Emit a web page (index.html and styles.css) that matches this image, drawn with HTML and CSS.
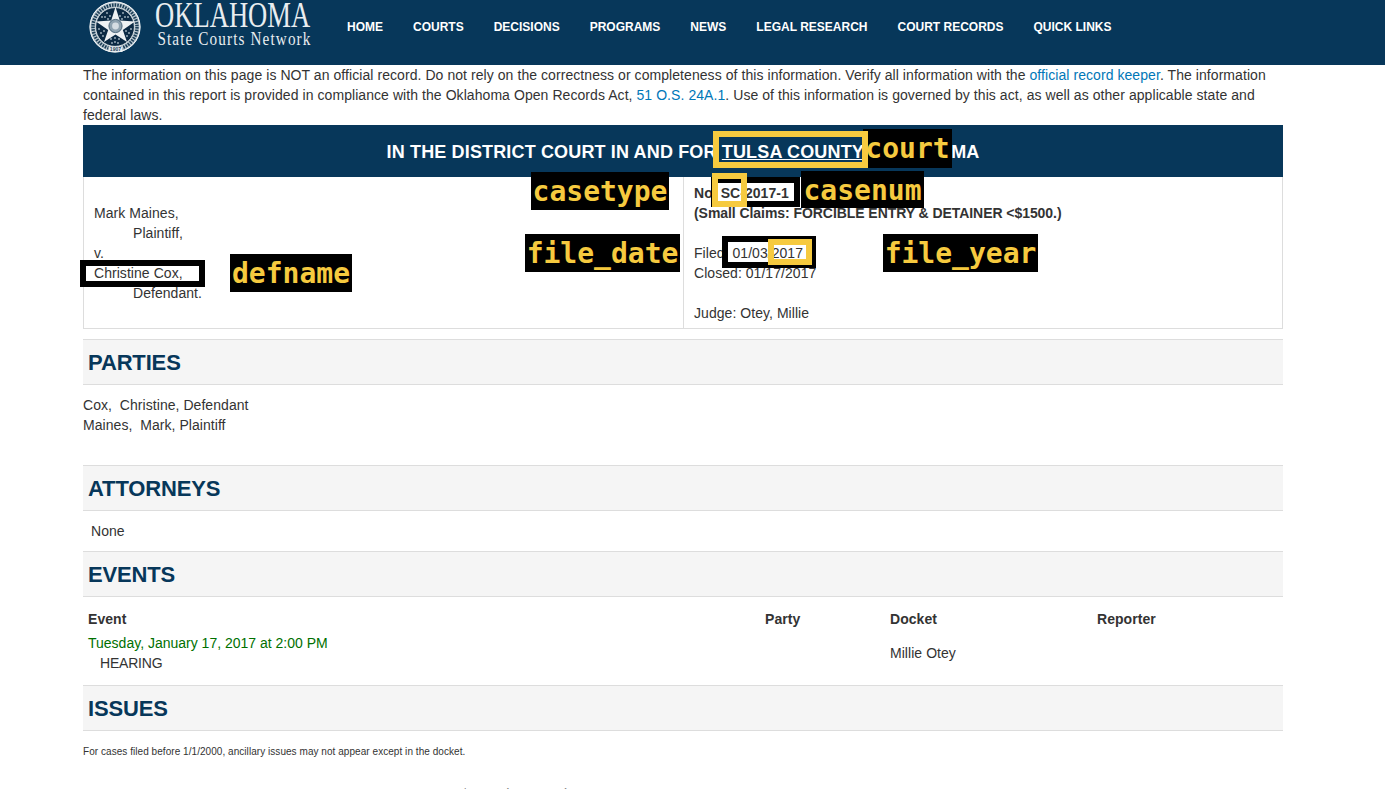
FILE: index.html
```html
<!DOCTYPE html>
<html lang="en">
<head>
    <meta charset="UTF-8">
    <title>Oklahoma State Courts Network</title>
    <link rel="stylesheet" href="styles.css">
</head>
<body>
    <header class="site-header">
        <div class="brand">
            <svg class="seal" width="52" height="52" viewBox="0 0 52 52">
                <circle cx="26" cy="26" r="25.5" fill="#b9c6cf"/>
                <circle cx="26" cy="26" r="25" fill="none" stroke="#f2f4f6" stroke-width="1"/>
                <circle cx="26" cy="26" r="22" fill="none" stroke="#1d3f58" stroke-width="3.4" stroke-dasharray="1.6 1.1"/>
                <circle cx="26" cy="26" r="19.4" fill="#0c2a44" stroke="#eef1f3" stroke-width="0.8"/>
                <g fill="#a9b9c4">
                    <circle cx="18" cy="12" r="0.9"/><circle cx="21" cy="15" r="0.9"/><circle cx="16" cy="16" r="0.9"/><circle cx="13" cy="16" r="0.9"/><circle cx="19" cy="18" r="0.9"/>
                    <circle cx="34" cy="12" r="0.9"/><circle cx="31" cy="15" r="0.9"/><circle cx="36" cy="16" r="0.9"/><circle cx="39" cy="16" r="0.9"/><circle cx="33" cy="18" r="0.9"/>
                    <circle cx="10" cy="28" r="0.9"/><circle cx="12" cy="32" r="0.9"/><circle cx="15" cy="30" r="0.9"/><circle cx="14" cy="35" r="0.9"/>
                    <circle cx="42" cy="28" r="0.9"/><circle cx="40" cy="32" r="0.9"/><circle cx="37" cy="30" r="0.9"/><circle cx="38" cy="35" r="0.9"/>
                    <circle cx="22" cy="38" r="0.9"/><circle cx="26" cy="37" r="0.9"/><circle cx="30" cy="38" r="0.9"/><circle cx="23" cy="42" r="0.9"/><circle cx="26" cy="41" r="0.9"/><circle cx="29" cy="42" r="0.9"/>
                </g>
                <polygon points="26.5,6 30.8,19.4 46,20.5 33.8,29 38,41 26.5,33.6 15,41 19.2,29 7,20.5 22.2,19.4" fill="#eef1f3"/>
                <circle cx="26.5" cy="25" r="6.6" fill="#8ea2b0" stroke="#35536a" stroke-width="0.8"/>
                <circle cx="26.5" cy="25" r="3.4" fill="#d5dde3"/>
                <rect x="19.5" y="45.5" width="14" height="5.5" fill="#e8ecef"/>
                <text class="seal-year" x="26.5" y="50" text-anchor="middle">1907</text>
            </svg>
            <div class="brand-text">
                <div class="brand-title">OKLAHOMA</div>
                <div class="brand-sub">State Courts Network</div>
            </div>
        </div>
        <nav class="main-nav">
            <a href="#">HOME</a>
            <a href="#">COURTS</a>
            <a href="#">DECISIONS</a>
            <a href="#">PROGRAMS</a>
            <a href="#">NEWS</a>
            <a href="#">LEGAL RESEARCH</a>
            <a href="#">COURT RECORDS</a>
            <a href="#">QUICK LINKS</a>
        </nav>
    </header>

    <main class="container">
        <p class="notice">The information on this page is NOT an official record. Do not rely on the correctness or completeness of this information. Verify all information with the <a href="#">official record keeper</a>. The information contained in this report is provided in compliance with the Oklahoma Open Records Act, <a href="#">51 O.S. 24A.1</a>. Use of this information is governed by this act, as well as other applicable state and federal laws.</p>

        <div class="court-banner">IN THE DISTRICT COURT IN AND FOR <a href="#">TULSA COUNTY</a>, OKLAHOMA</div>

        <div class="case-style">
            <div class="case-col case-parties">
                <div>Mark Maines,</div>
                <div class="indent">Plaintiff,</div>
                <div>v.</div>
                <div>Christine Cox,</div>
                <div class="indent">Defendant.</div>
            </div>
            <div class="case-col case-info">
                <div class="strong">No. SC-2017-1</div>
                <div class="strong case-kind">(Small Claims: FORCIBLE ENTRY &amp; DETAINER &lt;$1500.)</div>
                <div class="blank"></div>
                <div>Filed: 01/03/2017</div>
                <div>Closed: 01/17/2017</div>
                <div class="blank"></div>
                <div>Judge: Otey, Millie</div>
            </div>
        </div>

        <h2 class="section-head parties-head">PARTIES</h2>
        <div class="parties-list">
            <div>Cox,&nbsp; Christine, Defendant</div>
            <div>Maines,&nbsp; Mark, Plaintiff</div>
        </div>

        <h2 class="section-head">ATTORNEYS</h2>
        <div class="none-row">None</div>

        <h2 class="section-head">EVENTS</h2>
        <div class="events">
            <div class="event-col event-main">
                <div class="strong">Event</div>
                <div class="event-date">Tuesday, January 17, 2017 at 2:00 PM</div>
                <div class="event-name">HEARING</div>
            </div>
            <div class="event-col event-party">
                <div class="strong">Party</div>
            </div>
            <div class="event-col event-docket">
                <div class="strong">Docket</div>
                <div class="event-judge">Millie Otey</div>
            </div>
            <div class="event-col">
                <div class="strong">Reporter</div>
            </div>
        </div>

        <h2 class="section-head">ISSUES</h2>
        <p class="small-note">For cases filed before 1/1/2000, ancillary issues may not appear except in the docket.</p>
        <div class="issue-line">
            <span class="issue-no">Issue # 1.</span>
            <span>FORCIBLE ENTRY &amp; DETAINER &lt;$1500 (SCFED1)</span>
        </div>

        <!-- labels and boxes drawn over the scan -->
        <span class="mark mark-black box-defname"></span>
        <span class="tag tag-defname">defname</span>
        <span class="tag tag-court">court</span>
        <span class="mark mark-yellow box-court"></span>
        <span class="tag tag-casetype">casetype</span>
        <span class="mark mark-black box-casenum"></span>
        <span class="mark mark-yellow box-sc"></span>
        <span class="tag tag-casenum">casenum</span>
        <span class="tag tag-filedate">file_date</span>
        <span class="mark mark-black box-filedate"></span>
        <span class="mark mark-yellow box-fileyear"></span>
        <span class="tag tag-fileyear">file_year</span>
    </main>
</body>
</html>
```

FILE: styles.css
```css
html, body {
    margin: 0;
    height: 789px;
    overflow: hidden;
}
body {
    font-family: "Liberation Sans", Arial, sans-serif;
    font-size: 14px;
    line-height: 20px;
    letter-spacing: 0.05px;
    color: #333;
    background-color: white;
}
a {
    color: #0077b8;
    text-decoration: none;
}
.strong {
    font-weight: bold;
}

.site-header {
    height: 65px;
    background-color: #07375a;
    display: flex;
    align-items: flex-start;
    padding-left: 89px;
    box-sizing: border-box;
}
.brand {
    display: flex;
    width: 258px;
    padding-top: 1px;
}
.seal {
    flex: none;
}
.seal-year {
    font-family: "Liberation Sans", Arial, sans-serif;
    font-size: 5px;
    font-weight: bold;
    fill: #1d3f58;
}
.brand-text {
    margin-left: 14px;
    margin-top: -1px;
    color: #e9edf0;
    font-family: "Liberation Serif", "Times New Roman", serif;
    white-space: nowrap;
}
.brand-title {
    font-size: 35px;
    line-height: 32px;
    letter-spacing: 0;
    transform: scaleX(0.76);
    transform-origin: left top;
}
.brand-sub {
    font-size: 19px;
    line-height: 18px;
    letter-spacing: 1.4px;
    margin-top: -2px;
    padding-left: 3px;
    transform: scaleX(0.8);
    transform-origin: left top;
}
.main-nav {
    display: flex;
    gap: 30px;
    padding-top: 17px;
}
.main-nav a {
    color: white;
    font-size: 12px;
    font-weight: bold;
    line-height: 20px;
    letter-spacing: 0;
}

.container {
    position: relative;
    width: 1200px;
    margin-left: 83px;
}
.notice {
    margin: 0;
    letter-spacing: 0.065px;
}
.court-banner {
    height: 52px;
    line-height: 54px;
    background-color: #07375a;
    color: white;
    font-size: 18px;
    font-weight: bold;
    letter-spacing: 0.15px;
    text-align: center;
}
.court-banner a {
    color: white;
    text-decoration: underline;
}
.case-style {
    display: flex;
    height: 152px;
    box-sizing: border-box;
    border: 1px solid #ddd;
    border-top: none;
}
.case-col {
    padding: 26px 10px 0;
}
.case-parties {
    width: 579px;
    border-right: 1px solid #ddd;
}
.case-info {
    padding-top: 6px;
}
.case-kind {
    letter-spacing: -0.06px;
}
.blank {
    height: 20px;
}
.indent {
    padding-left: 39px;
}

.section-head {
    margin: 0;
    height: 46px;
    box-sizing: border-box;
    border-top: 1px solid #ddd;
    border-bottom: 1px solid #ddd;
    background-color: #f5f5f5;
    color: #07375a;
    font-size: 22px;
    line-height: 45px;
    letter-spacing: -0.15px;
    padding-left: 5px;
}
.parties-head {
    margin-top: 10px;
}
.parties-list {
    height: 80px;
    padding-top: 10px;
    box-sizing: border-box;
}
.none-row {
    height: 40px;
    line-height: 40px;
    padding-left: 8px;
}
.events {
    display: flex;
    height: 88px;
    padding: 12px 0 0 5px;
    box-sizing: border-box;
}
.event-main {
    width: 677px;
}
.event-party {
    width: 125px;
}
.event-docket {
    width: 207px;
}
.event-date {
    color: #007000;
    letter-spacing: 0;
    margin-top: 4px;
}
.event-name {
    padding-left: 12px;
    letter-spacing: -0.2px;
}
.event-judge {
    margin-top: 14px;
}
.small-note {
    margin: 0;
    padding-top: 11px;
    font-size: 10px;
    line-height: 20px;
}
.issue-line {
    display: flex;
    margin-top: 22px;
    padding-left: 5px;
    color: #777;
}
.issue-no {
    width: 152px;
}

/* labels over the page */
.tag {
    position: absolute;
    background-color: black;
    color: #f6ca3f;
    font-family: "DejaVu Sans Mono", monospace;
    font-size: 28px;
    font-weight: bold;
    line-height: 40px;
    height: 38px;
    letter-spacing: 0;
    text-align: center;
}
.mark {
    position: absolute;
    box-sizing: border-box;
    border-style: solid;
    border-width: 6px;
}
.mark-black {
    border-color: black;
}
.mark-yellow {
    border-color: #f6ca3f;
}
.tag-defname { left: 147px; top: 189px; width: 122px; }
.box-defname { left: -3px; top: 195px; width: 125px; height: 27px; }
.tag-court { left: 780px; top: 64px; width: 89px; height: 39px; }
.box-court { left: 630px; top: 66px; width: 155px; height: 37px; }
.tag-casetype { left: 448px; top: 107px; width: 138px; }
.box-casenum { left: 628px; top: 112px; width: 89px; height: 30px; }
.box-sc { left: 629px; top: 108px; width: 35px; height: 34px; }
.tag-casenum { left: 718px; top: 106px; width: 123px; height: 37px; }
.tag-filedate { left: 442px; top: 169px; width: 155px; }
.box-filedate { left: 639px; top: 171px; width: 94px; height: 32px; }
.box-fileyear { left: 685px; top: 174px; width: 44px; height: 26px; }
.tag-fileyear { left: 800px; top: 169px; width: 155px; }
```
